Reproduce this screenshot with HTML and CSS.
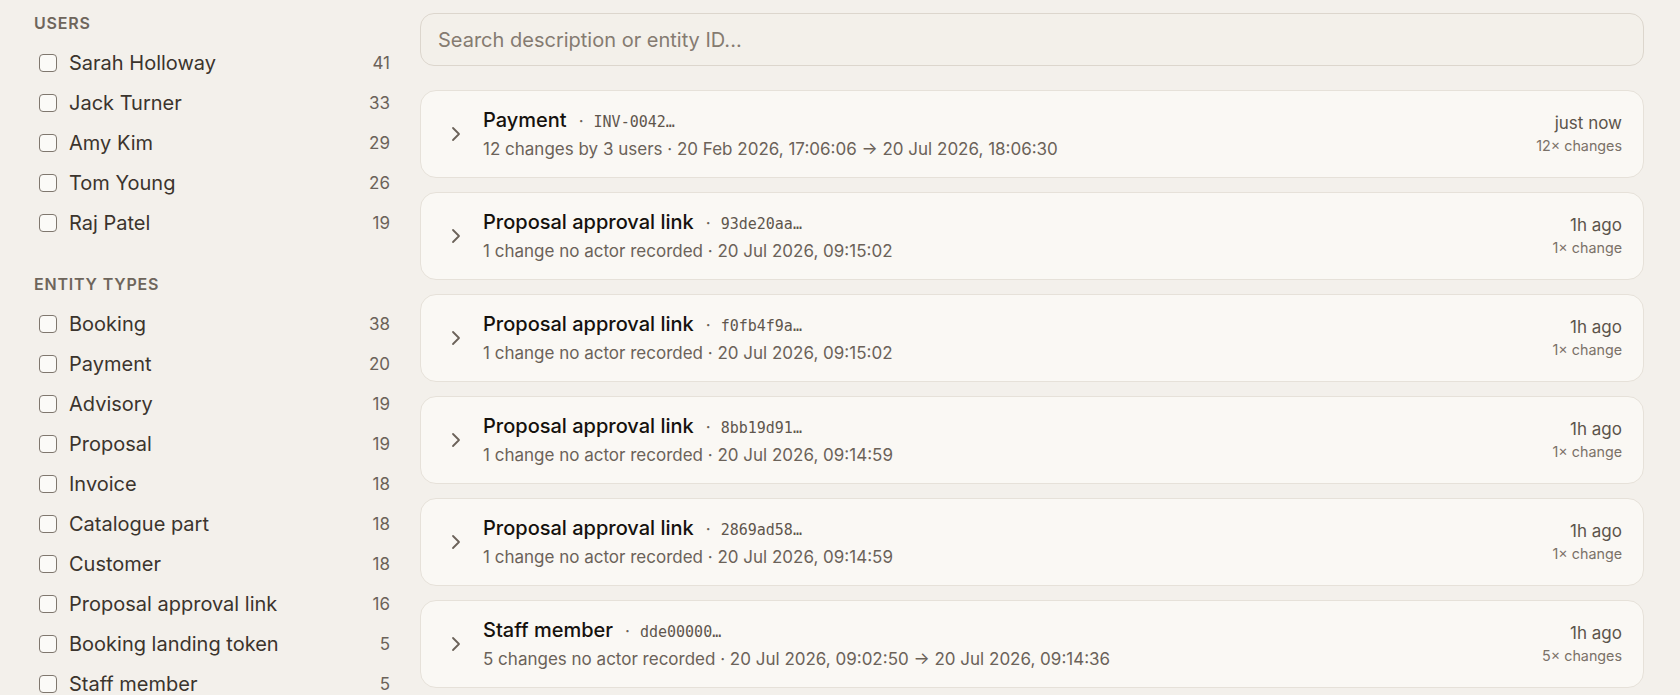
FILE: index.html
```html
<!DOCTYPE html>
<html lang="en">
<head>
<meta charset="utf-8">
<title>Audit log</title>
<link rel="stylesheet" href="styles.css">
</head>
<body>
<div class="layout">
  <aside class="sidebar">
    <section class="filter-group">
      <h3 class="filter-title">Users</h3>
      <label class="filter-row"><input type="checkbox" class="cb"><span class="filter-label">Sarah Holloway</span><span class="filter-count">41</span></label>
      <label class="filter-row"><input type="checkbox" class="cb"><span class="filter-label">Jack Turner</span><span class="filter-count">33</span></label>
      <label class="filter-row"><input type="checkbox" class="cb"><span class="filter-label">Amy Kim</span><span class="filter-count">29</span></label>
      <label class="filter-row"><input type="checkbox" class="cb"><span class="filter-label">Tom Young</span><span class="filter-count">26</span></label>
      <label class="filter-row"><input type="checkbox" class="cb"><span class="filter-label">Raj Patel</span><span class="filter-count">19</span></label>
    </section>
    <section class="filter-group">
      <h3 class="filter-title">Entity types</h3>
      <label class="filter-row"><input type="checkbox" class="cb"><span class="filter-label">Booking</span><span class="filter-count">38</span></label>
      <label class="filter-row"><input type="checkbox" class="cb"><span class="filter-label">Payment</span><span class="filter-count">20</span></label>
      <label class="filter-row"><input type="checkbox" class="cb"><span class="filter-label">Advisory</span><span class="filter-count">19</span></label>
      <label class="filter-row"><input type="checkbox" class="cb"><span class="filter-label">Proposal</span><span class="filter-count">19</span></label>
      <label class="filter-row"><input type="checkbox" class="cb"><span class="filter-label">Invoice</span><span class="filter-count">18</span></label>
      <label class="filter-row"><input type="checkbox" class="cb"><span class="filter-label">Catalogue part</span><span class="filter-count">18</span></label>
      <label class="filter-row"><input type="checkbox" class="cb"><span class="filter-label">Customer</span><span class="filter-count">18</span></label>
      <label class="filter-row"><input type="checkbox" class="cb"><span class="filter-label">Proposal approval link</span><span class="filter-count">16</span></label>
      <label class="filter-row"><input type="checkbox" class="cb"><span class="filter-label">Booking landing token</span><span class="filter-count">5</span></label>
      <label class="filter-row"><input type="checkbox" class="cb"><span class="filter-label">Staff member</span><span class="filter-count">5</span></label>
    </section>
  </aside>

  <main class="main">
    <input class="search" type="text" placeholder="Search description or entity ID...">

    <div class="entries">
      <div class="entry">
        <svg class="chevron" viewBox="0 0 10 16" width="10" height="16"><path d="M2 2l6 6-6 6" fill="none" stroke="currentColor" stroke-width="1.8" stroke-linecap="round" stroke-linejoin="round"/></svg>
        <div class="entry-body">
          <div class="entry-head"><span class="entry-title">Payment</span><span class="sep">·</span><span class="entry-id">INV-0042…</span></div>
          <div class="entry-sub">12 changes by 3 users · 20 Feb 2026, 17:06:06 → 20 Jul 2026, 18:06:30</div>
        </div>
        <div class="entry-meta"><div class="entry-time">just now</div><div class="entry-count">12× changes</div></div>
      </div>

      <div class="entry">
        <svg class="chevron" viewBox="0 0 10 16" width="10" height="16"><path d="M2 2l6 6-6 6" fill="none" stroke="currentColor" stroke-width="1.8" stroke-linecap="round" stroke-linejoin="round"/></svg>
        <div class="entry-body">
          <div class="entry-head"><span class="entry-title">Proposal approval link</span><span class="sep">·</span><span class="entry-id">93de20aa…</span></div>
          <div class="entry-sub">1 change no actor recorded · 20 Jul 2026, 09:15:02</div>
        </div>
        <div class="entry-meta"><div class="entry-time">1h ago</div><div class="entry-count">1× change</div></div>
      </div>

      <div class="entry">
        <svg class="chevron" viewBox="0 0 10 16" width="10" height="16"><path d="M2 2l6 6-6 6" fill="none" stroke="currentColor" stroke-width="1.8" stroke-linecap="round" stroke-linejoin="round"/></svg>
        <div class="entry-body">
          <div class="entry-head"><span class="entry-title">Proposal approval link</span><span class="sep">·</span><span class="entry-id">f0fb4f9a…</span></div>
          <div class="entry-sub">1 change no actor recorded · 20 Jul 2026, 09:15:02</div>
        </div>
        <div class="entry-meta"><div class="entry-time">1h ago</div><div class="entry-count">1× change</div></div>
      </div>

      <div class="entry">
        <svg class="chevron" viewBox="0 0 10 16" width="10" height="16"><path d="M2 2l6 6-6 6" fill="none" stroke="currentColor" stroke-width="1.8" stroke-linecap="round" stroke-linejoin="round"/></svg>
        <div class="entry-body">
          <div class="entry-head"><span class="entry-title">Proposal approval link</span><span class="sep">·</span><span class="entry-id">8bb19d91…</span></div>
          <div class="entry-sub">1 change no actor recorded · 20 Jul 2026, 09:14:59</div>
        </div>
        <div class="entry-meta"><div class="entry-time">1h ago</div><div class="entry-count">1× change</div></div>
      </div>

      <div class="entry">
        <svg class="chevron" viewBox="0 0 10 16" width="10" height="16"><path d="M2 2l6 6-6 6" fill="none" stroke="currentColor" stroke-width="1.8" stroke-linecap="round" stroke-linejoin="round"/></svg>
        <div class="entry-body">
          <div class="entry-head"><span class="entry-title">Proposal approval link</span><span class="sep">·</span><span class="entry-id">2869ad58…</span></div>
          <div class="entry-sub">1 change no actor recorded · 20 Jul 2026, 09:14:59</div>
        </div>
        <div class="entry-meta"><div class="entry-time">1h ago</div><div class="entry-count">1× change</div></div>
      </div>

      <div class="entry">
        <svg class="chevron" viewBox="0 0 10 16" width="10" height="16"><path d="M2 2l6 6-6 6" fill="none" stroke="currentColor" stroke-width="1.8" stroke-linecap="round" stroke-linejoin="round"/></svg>
        <div class="entry-body">
          <div class="entry-head"><span class="entry-title">Staff member</span><span class="sep">·</span><span class="entry-id">dde00000…</span></div>
          <div class="entry-sub">5 changes no actor recorded · 20 Jul 2026, 09:02:50 → 20 Jul 2026, 09:14:36</div>
        </div>
        <div class="entry-meta"><div class="entry-time">1h ago</div><div class="entry-count">5× changes</div></div>
      </div>
    </div>
  </main>
</div>
</body>
</html>
```

FILE: styles.css
```css
* { box-sizing: border-box; }

html, body {
  margin: 0;
  height: 100%;
}

body {
  background: #f3f0eb;
  font-family: Inter, "Noto Sans", "Liberation Sans", sans-serif;
  color: #3b342d;
  overflow: hidden;
}

.layout {
  display: grid;
  grid-template-columns: 420px 1fr;
  padding-right: 36px;
  height: 695px;
  overflow: hidden;
}

/* Sidebar */
.sidebar {
  padding: 14px 30px 0 34px;
  display: flex;
  flex-direction: column;
  gap: 32px;
}

.filter-group {
  display: flex;
  flex-direction: column;
}

.filter-title {
  margin: 0 0 11px;
  font-size: 16px;
  line-height: 18px;
  font-weight: 600;
  letter-spacing: 0.05em;
  text-transform: uppercase;
  color: #6e655b;
}

.filter-row {
  display: flex;
  align-items: center;
  height: 40px;
  padding-left: 5px;
  gap: 12px;
  cursor: pointer;
}

.cb {
  appearance: none;
  -webkit-appearance: none;
  margin: 0;
  width: 18px;
  height: 18px;
  border: 1.5px solid #7f776e;
  border-radius: 4px;
  background: #fbfaf7;
  flex: none;
}

.filter-label {
  flex: 1;
  font-size: 20px;
  color: #3b342d;
  white-space: nowrap;
}

.filter-count {
  font-size: 17px;
  color: #6b6259;
}

/* Main */
.main {
  padding-top: 13px;
  display: flex;
  flex-direction: column;
  gap: 24px;
  min-width: 0;
}

.search {
  width: 100%;
  height: 53px;
  border: 1.5px solid #dcd6cd;
  border-radius: 14px;
  background: #f3f0ea;
  padding: 0 17px;
  font-family: Inter, "Noto Sans", sans-serif;
  font-size: 20px;
  color: #3b342d;
  outline: none;
}

.search::placeholder {
  color: #857b71;
}

.entries {
  display: flex;
  flex-direction: column;
  gap: 14px;
}

.entry {
  display: flex;
  align-items: center;
  height: 88px;
  padding: 0 21px 0 30px;
  background: #faf8f4;
  border: 1px solid #e6e1d9;
  border-radius: 16px;
  flex: none;
}

.chevron {
  flex: none;
  color: #6b6259;
  margin-right: 22px;
}

.entry-body {
  flex: 1;
  min-width: 0;
  display: flex;
  flex-direction: column;
  gap: 2px;
}

.entry-head {
  display: flex;
  align-items: baseline;
  line-height: 26px;
}

.entry-title {
  font-size: 20px;
  font-weight: 500;
  color: #15110d;
}

.sep {
  font-size: 17px;
  color: #6b6259;
  margin: 0 10px 0 12px;
}

.entry-id {
  font-family: "DejaVu Sans Mono", "Liberation Mono", monospace;
  font-size: 15px;
  color: #5f564d;
}

.entry-sub {
  font-size: 17px;
  line-height: 24px;
  color: #6b6259;
  white-space: nowrap;
}

.entry-meta {
  text-align: right;
  display: flex;
  flex-direction: column;
  gap: 2px;
}

.entry-time {
  font-size: 17px;
  line-height: 22px;
  color: #5c544b;
}

.entry-count {
  font-size: 14.3px;
  line-height: 20px;
  color: #7a7168;
}
```
